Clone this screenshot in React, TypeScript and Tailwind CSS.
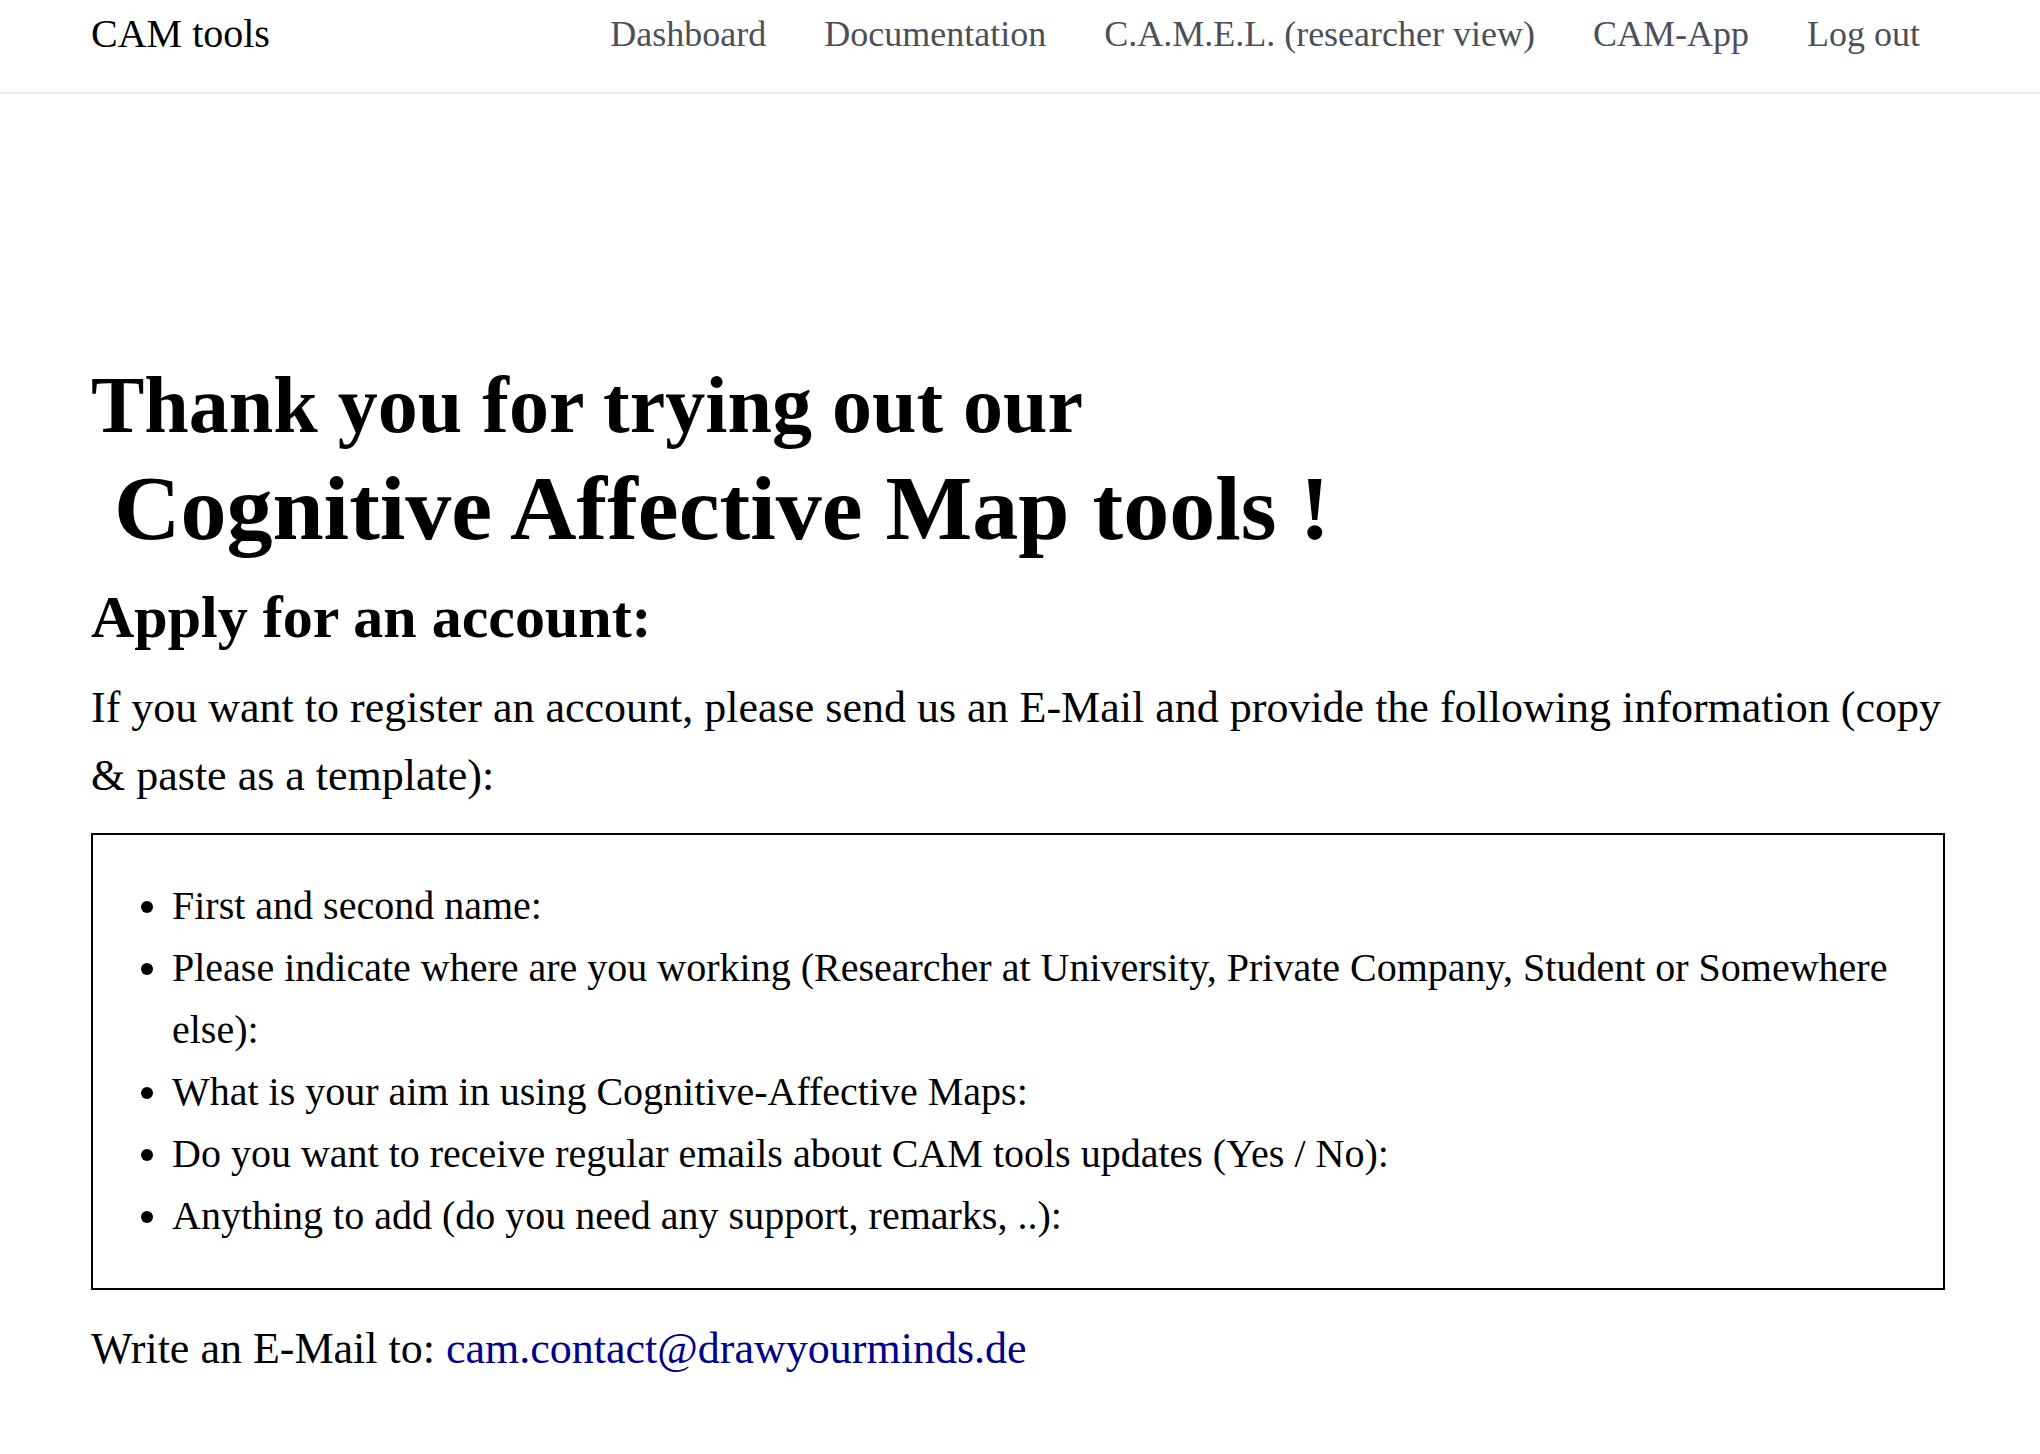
import React from "react";

const navLinks = [
  "Dashboard",
  "Documentation",
  "C.A.M.E.L. (researcher view)",
  "CAM-App",
  "Log out"
];

const templateFields = [
  "First and second name:",
  "Please indicate where are you working (Researcher at University, Private Company, Student or Somewhere else):",
  "What is your aim in using Cognitive-Affective Maps:",
  "Do you want to receive regular emails about CAM tools updates (Yes / No):",
  "Anything to add (do you need any support, remarks, ..):"
];

export default function App() {
  return (
    <div className="min-h-screen bg-white text-black font-['Liberation_Serif','Times_New_Roman',serif]">
      <header className="h-[94px] border-b-2 border-[#ebebf0] flex justify-between items-start pt-[11px] pl-[91px] pr-[120px]">
        <a href="#" className="text-[40px] leading-[46px] text-black">
          CAM tools
        </a>
        <nav className="flex gap-[58px] pt-[2px]">
          {navLinks.map((link) => (
            <a
              key={link}
              href="#"
              className="text-[36px] leading-[42px] text-[#4b5058]"
            >
              {link}
            </a>
          ))}
        </nav>
      </header>

      <main className="pl-[91px] pr-[95px] pt-[261px] pb-16">
        <h1 className="font-bold">
          <span className="block text-[80px] leading-[100px]">
            Thank you for trying out our
          </span>
          <span className="block text-[92px] leading-[106px] pl-[23px]">
            Cognitive Affective Map tools !
          </span>
        </h1>

        <h2 className="mt-[20px] text-[60px] leading-[72px] font-bold">
          Apply for an account:
        </h2>

        <p className="mt-[21px] text-[44px] leading-[68px]">
          If you want to register an account, please send us an E-Mail and
          provide the following information (copy &amp; paste as a template):
        </p>

        <div className="mt-[23px] border-2 border-black pt-[40px] pb-[41px]">
          <ul className="list-disc pl-[79px] pr-4 text-[40px] leading-[62px]">
            {templateFields.map((field) => (
              <li key={field}>{field}</li>
            ))}
          </ul>
        </div>

        <p className="mt-[25px] text-[44px] leading-[68px]">
          Write an E-Mail to:{" "}
          <a href="mailto:cam.contact@drawyourminds.de" className="text-[#00008b]">
            cam.contact@drawyourminds.de
          </a>
        </p>
      </main>
    </div>
  );
}
